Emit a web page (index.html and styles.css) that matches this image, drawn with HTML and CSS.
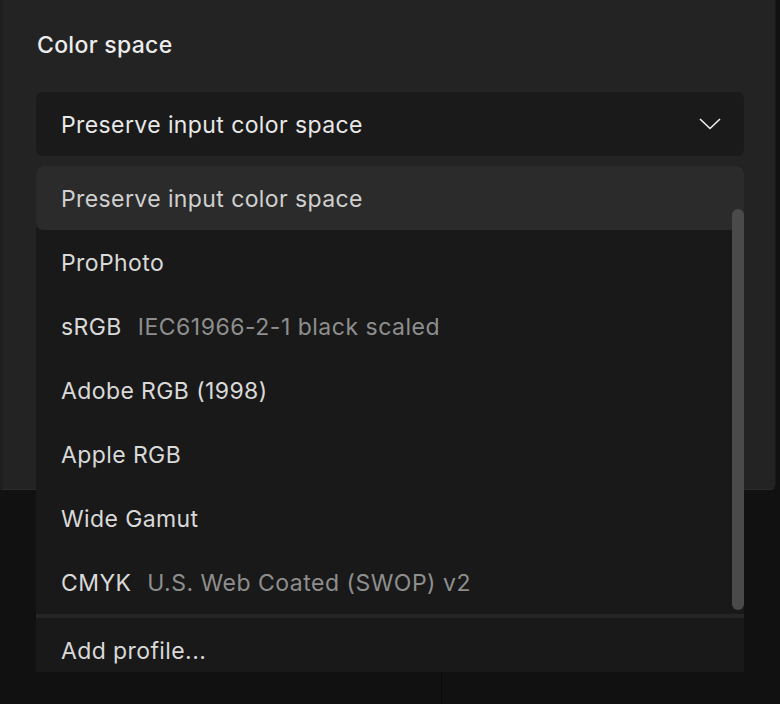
FILE: index.html
```html
<!DOCTYPE html>
<html lang="en">
<head>
  <meta charset="UTF-8">
  <title>Color space</title>
  <link rel="stylesheet" href="styles.css">
</head>
<body>

<div class="panel">
  <div class="field-title">Color space</div>

  <div class="select-wrap">
    <!-- 閉じた状態のセレクト -->
    <div class="select-box">
      <span>Preserve input color space</span>
      <svg class="chevron" width="22" height="12" viewBox="0 0 22 12">
        <path d="M1 1 L11 10.5 L21 1" fill="none" stroke="#f0f0f0" stroke-width="1.6"/>
      </svg>
    </div>

    <!-- 開いたメニュー -->
    <div class="menu">
      <div class="menu-list">
        <div class="menu-item selected">Preserve input color space</div>
        <div class="menu-item">ProPhoto</div>
        <div class="menu-item">sRGB <span class="sub">IEC61966-2-1 black scaled</span></div>
        <div class="menu-item">Adobe RGB (1998)</div>
        <div class="menu-item">Apple RGB</div>
        <div class="menu-item">Wide Gamut</div>
        <div class="menu-item">CMYK <span class="sub">U.S. Web Coated (SWOP) v2</span></div>
      </div>
      <div class="menu-sep"></div>
      <div class="menu-item">Add profile...</div>
      <div class="scrollbar"></div>
    </div>
  </div>
</div>

<div class="bottom-area">
  <div class="bottom-left"></div>
  <div class="bottom-right"></div>
</div>

</body>
</html>
```

FILE: styles.css
```css
/* === 全体 === */
body {
  margin: 0;
  background: #111111;
  font-family: Inter, "Noto Sans", sans-serif;
  color: #e6e6e6;
  width: 780px;
  height: 704px;
  overflow: hidden;
}

/* === 上のパネル === */
.panel {
  margin-left: 3px;
  width: 772px;
  height: 489px;
  background: #232323;
  border-bottom: 1px solid #2c2c2c;
  border-right: 1px solid #191919;
  border-bottom-right-radius: 6px;
  box-shadow: -3px 0 0 #1f1f1f, -1px 0 0 #171717;
  box-sizing: content-box;
}

.field-title {
  padding: 30px 0 0 34px;
  font-size: 23px;
  line-height: 30px;
  font-weight: 500;
  letter-spacing: 0.3px;
  color: #ececec;
}

/* === セレクト === */
.select-wrap {
  position: relative;
  margin: 32px 0 0 33px;
  width: 708px;
}

.select-box {
  height: 64px;
  background: #1a1a1a;
  border-radius: 7px;
  display: flex;
  align-items: center;
  justify-content: space-between;
  padding: 2px 23px 0 25px;
  font-size: 23px;
  letter-spacing: 0.4px;
  color: #e8e8e8;
  box-sizing: border-box;
}

.chevron {
  display: block;
  margin-top: -2px;
}

/* === ドロップダウンメニュー（上に重ねる） === */
.menu {
  position: absolute;
  top: 74px;
  left: 0;
  width: 708px;
  height: 506px;
  overflow: hidden;
  background: #191919;
  border-radius: 7px 7px 0 0;
  z-index: 2;
}

.menu-item {
  height: 64px;
  display: flex;
  align-items: center;
  padding: 2px 0 0 25px;
  box-sizing: border-box;
  font-size: 23px;
  letter-spacing: 0.4px;
  color: #d9d9d9;
}

.menu-item.selected {
  background: #2b2b2b;
  border-radius: 7px;
  color: #d0d0d0;
}

.menu-item .sub {
  color: #8e8e8e;
  margin-left: 16px;
  letter-spacing: 0.5px;
}

.menu-sep {
  height: 4px;
  background: #252525;
}

.scrollbar {
  position: absolute;
  right: 0;
  top: 43px;
  width: 12px;
  height: 401px;
  background: #4a4a4a;
  border-radius: 6px;
}

/* === 下のエリア === */
.bottom-area {
  display: flex;
  height: 214px;
}

.bottom-left {
  width: 441px;
  border-right: 1px solid #0a0a0a;
}

.bottom-right {
  flex: 1;
}
```
